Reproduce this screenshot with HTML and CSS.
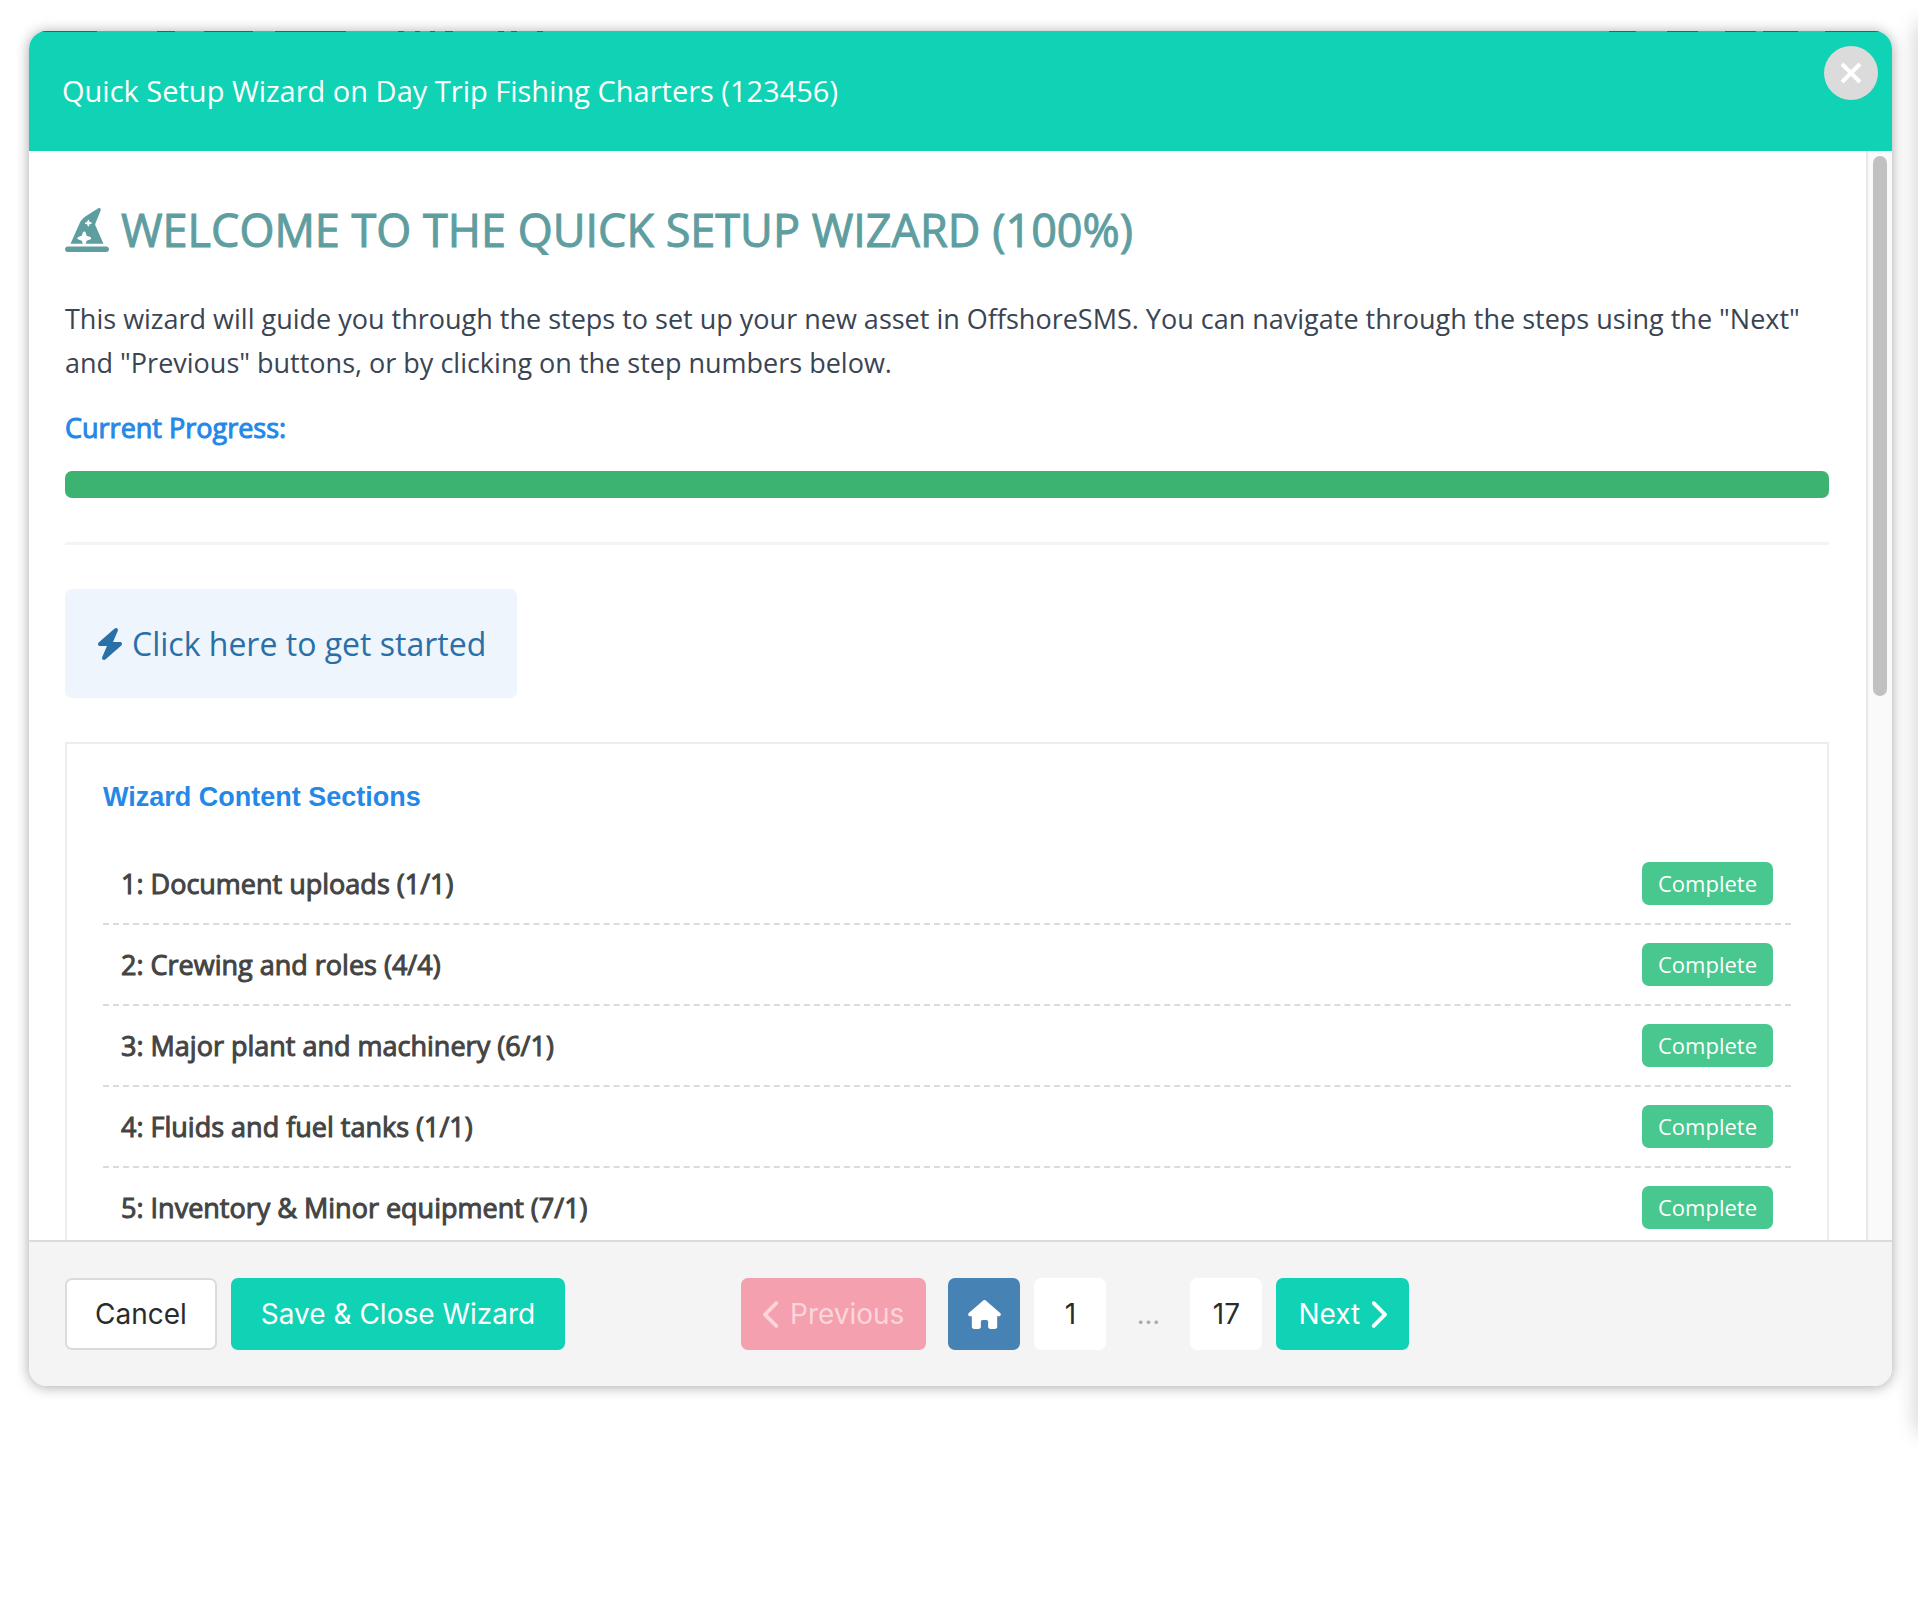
FILE: index.html
```html
<!DOCTYPE html>
<html lang="en">
  <head>
    <meta charset="utf-8">
    <title>Quick Setup Wizard</title>
    <link rel="stylesheet" href="styles.css">
  </head>
  <body>
    <div class="modal" role="dialog" aria-labelledby="modal-title">
      <header class="modal-head">
        <p id="modal-title" class="modal-title">Quick Setup Wizard on Day Trip Fishing Charters (123456)</p>
        <button type="button" class="close" aria-label="Close">
          <svg viewBox="0 0 24 24"><path d="M3 3l18 18M21 3L3 21"/></svg>
        </button>
      </header>

      <div class="modal-body">
        <main class="content">
          <h1>
            <svg class="hat" viewBox="0 0 512 512"><path d="M64 416L168.6 180.7c15.3-34.4 40.3-63.5 72-83.7l146.9-94c3-1.9 6.5-2.9 10-2.9C407.7 0 416 8.3 416 18.6v1.6c0 2.6-.5 5.1-1.4 7.5L354.8 176.9c-1.9 4.7-2.8 9.7-2.8 14.7c0 5.5 1.2 11 3.4 16.1L448 416H240.9l11.8-35.4 40.4-13.5c6.5-2.2 10.9-8.3 10.9-15.2s-4.4-13-10.9-15.2l-40.4-13.5-13.5-40.4C237 276.4 230.9 272 224 272s-13 4.4-15.2 10.9l-13.5 40.4-40.4 13.5C148.4 339 144 345.1 144 352s4.4 13 10.9 15.2l40.4 13.5L207.1 416H64zM279.6 141.5c-1.1-3.3-4.1-5.5-7.6-5.5s-6.5 2.2-7.6 5.5l-6.7 20.2-20.2 6.7c-3.3 1.1-5.5 4.1-5.5 7.6s2.2 6.5 5.5 7.6l20.2 6.7 6.7 20.2c1.1 3.3 4.1 5.5 7.6 5.5s6.5-2.2 7.6-5.5l6.7-20.2 20.2-6.7c3.3-1.1 5.5-4.1 5.5-7.6s-2.2-6.5-5.5-7.6l-20.2-6.7-6.7-20.2zM32 448H480c17.7 0 32 14.3 32 32s-14.3 32-32 32H32c-17.7 0-32-14.3-32-32s14.3-32 32-32z"/></svg>
            WELCOME TO THE QUICK SETUP WIZARD (100%)
          </h1>
          <p class="intro">This wizard will guide you through the steps to set up your new asset in OffshoreSMS. You can navigate through the steps using the "Next" and "Previous" buttons, or by clicking on the step numbers below.</p>
          <label class="progress-label" for="progress">Current Progress:</label>
          <progress id="progress" value="100" max="100"></progress>
          <hr>
          <button type="button" class="start">
            <svg class="bolt" viewBox="0 0 448 512"><path d="M349.4 44.6c5.9-13.7 1.5-29.7-10.6-38.5s-28.6-8-39.9 1.8l-256 224c-10 8.8-13.6 22.9-8.9 35.3S50.7 288 64 288l111.5 0L98.6 467.4c-5.9 13.7-1.5 29.7 10.6 38.5s28.6 8 39.9-1.8l256-224c10-8.8 13.6-22.9 8.9-35.3s-16.6-20.7-30-20.7l-111.5 0L349.4 44.6z"/></svg>
            Click here to get started
          </button>

          <section class="sections">
            <h2>Wizard Content Sections</h2>
            <ul>
              <li><span>1: Document uploads (1/1)</span><span class="tag">Complete</span></li>
              <li><span>2: Crewing and roles (4/4)</span><span class="tag">Complete</span></li>
              <li><span>3: Major plant and machinery (6/1)</span><span class="tag">Complete</span></li>
              <li><span>4: Fluids and fuel tanks (1/1)</span><span class="tag">Complete</span></li>
              <li><span>5: Inventory &amp; Minor equipment (7/1)</span><span class="tag">Complete</span></li>
            </ul>
          </section>
        </main>
        <div class="scrollbar"><div class="thumb"></div></div>
      </div>

      <footer class="modal-foot">
        <div class="actions">
          <button type="button" class="btn cancel">Cancel</button>
          <button type="button" class="btn primary save">Save &amp; Close Wizard</button>
        </div>
        <nav class="pager" aria-label="Wizard steps">
          <button type="button" class="btn previous" disabled>
            <svg class="chevron" viewBox="0 0 320 512"><path d="M9.4 233.4c-12.5 12.5-12.5 32.8 0 45.3l192 192c12.5 12.5 32.8 12.5 45.3 0s12.5-32.8 0-45.3L77.3 256 246.6 86.6c12.5-12.5 12.5-32.8 0-45.3s-32.8-12.5-45.3 0l-192 192z"/></svg>
            Previous
          </button>
          <button type="button" class="btn page home" aria-label="Home">
            <svg class="house" viewBox="0 0 576 512"><path d="M575.8 255.5c0 18-15 32.1-32 32.1h-32l.7 160.2c0 2.7-.2 5.4-.5 8.1V472c0 22.1-17.9 40-40 40H456c-1.1 0-2.2 0-3.3-.1c-1.4 .1-2.8 .1-4.2 .1H416 392c-22.1 0-40-17.9-40-40V448 384c0-17.7-14.3-32-32-32H256c-17.7 0-32 14.3-32 32v64 24c0 22.1-17.9 40-40 40H160 128.1c-1.5 0-3-.1-4.5-.2c-1.2 .1-2.4 .2-3.6 .2H104c-22.1 0-40-17.9-40-40V360c0-.9 0-1.9 .1-2.8V287.6H32c-18 0-32-14-32-32.1c0-9 3-17 10-24L266.4 8c7-7 15-8 22-8s15 2 21 7L564.8 231.5c8 7 12 15 11 24z"/></svg>
          </button>
          <button type="button" class="btn page">1</button>
          <span class="dots">…</span>
          <button type="button" class="btn page">17</button>
          <button type="button" class="btn primary next">
            Next
            <svg class="chevron" viewBox="0 0 320 512"><path d="M310.6 233.4c12.5 12.5 12.5 32.8 0 45.3l-192 192c-12.5 12.5-32.8 12.5-45.3 0s-12.5-32.8 0-45.3L242.7 256 73.4 86.6c-12.5-12.5-12.5-32.8 0-45.3s32.8-12.5 45.3 0l192 192z"/></svg>
          </button>
        </nav>
      </footer>
    </div>
    <div class="side-panel"></div>
  </body>
</html>
```

FILE: styles.css
```css
*{
	box-sizing:border-box;
}
body{
	margin:0;
	position:relative;
	min-height:100vh;
	overflow:hidden;
	background:#fff;
	font-family:"Open Sans", sans-serif;
	font-size:27px;
	color:#3a4453;
}
button{
	font-family:inherit;
	cursor:pointer;
}
svg{
	fill:currentColor;
	flex:none;
}

.modal{
	display:flex;
	flex-direction:column;
	height:calc(100vh - 243px);
	margin:31px 26px 0 29px;
	border-radius:18px;
	overflow:hidden;
	background:#fff;
	box-shadow:0 1px 14px rgba(0,0,0,0.35);
}
/* the dark strips are bits of the page behind, seen along the top edge */
.modal-head{
	display:flex;
	justify-content:space-between;
	align-items:flex-start;
	height:120px;
	flex:none;
	padding:15px 14px 0 33px;
	background:
		linear-gradient(to right, transparent 8px, #1a6f63 8px 68px, transparent 68px 128px, #1a6f63 128px 146px, transparent 146px 175px, #1a6f63 175px 224px, transparent 224px 246px, #1a6f63 246px 317px, transparent 317px 369px, #1a6f63 369px 375px, transparent 375px 386px, #1a6f63 386px 391px, transparent 391px 401px, #1a6f63 401px 406px, transparent 406px 416px, #1a6f63 416px 424px, transparent 424px 469px, #1a6f63 469px 475px, transparent 475px 482px, #1a6f63 482px 488px, transparent 488px 508px, #1a6f63 508px 514px, transparent 514px) top left / 100% 1px no-repeat,
		linear-gradient(to left, transparent 12px, #1a6f63 12px 67px, transparent 67px 94px, #1a6f63 94px 129px, transparent 129px 136px, #1a6f63 136px 167px, transparent 167px 194px, #1a6f63 194px 225px, transparent 225px 256px, #1a6f63 256px 283px, transparent 283px) top left / 100% 1px no-repeat,
		#10d2b4;
}
.modal-title{
	margin:23px 0 0;
	font-size:29px;
	line-height:44px;
	color:#fff;
}
.close{
	display:flex;
	align-items:center;
	justify-content:center;
	width:54px;
	height:54px;
	padding:0;
	border:0;
	border-radius:50%;
	background:#dbdbdb;
	color:#fff;
}
.close svg{
	width:24px;
	height:24px;
	fill:none;
	stroke:currentColor;
	stroke-width:4;
}

.modal-body{
	display:flex;
	flex:1;
	min-height:0;
}
.content{
	flex:1;
	padding:47px 37px 36px 36px;
	overflow:auto;
	scrollbar-width:none;
}
.scrollbar{
	width:26px;
	padding:5px;
	border-left:2px solid #e8e8e8;
	background:#fafafa;
}
.thumb{
	width:14px;
	height:50%;
	border-radius:7px;
	background:#c1c1c1;
}

h1{
	display:flex;
	align-items:center;
	gap:12px;
	margin:0 0 35px;
	font-size:45px;
	line-height:64px;
	font-weight:400;
	color:#5f9ea0;
	-webkit-text-stroke:1px;
}
.hat{
	width:44px;
	height:44px;
}
.intro{
	margin:0 0 21px;
	line-height:44px;
}
.progress-label{
	display:block;
	margin-bottom:21px;
	line-height:44px;
	color:#2488e8;
	-webkit-text-stroke:1px;
}
progress{
	display:block;
	width:100%;
	height:27px;
	border:0;
	border-radius:7px;
	overflow:hidden;
	appearance:none;
	background:#ededed;
}
progress::-webkit-progress-bar{
	background:#ededed;
}
progress::-webkit-progress-value{
	background:#3cb371;
}
hr{
	height:3px;
	margin:44px 0;
	border:0;
	background:#f4f4f4;
}
.start{
	display:flex;
	align-items:center;
	gap:8px;
	height:109px;
	margin-bottom:44px;
	padding:0 31px;
	border:0;
	border-radius:7px;
	background:#eef5fc;
	color:#296fa8;
	font-size:32px;
}
.bolt{
	width:28px;
	height:32px;
}

.sections{
	padding:35px 36px;
	border:2px solid #ededed;
}
h2{
	margin:0 0 29px;
	font-family:"Liberation Sans", Arial, sans-serif;
	font-size:27px;
	line-height:36px;
	font-weight:bold;
	color:#2488e8;
}
ul{
	margin:0;
	padding:0;
	list-style:none;
}
li{
	display:flex;
	justify-content:space-between;
	align-items:center;
	padding:18px;
	border-bottom:2px dashed #dbdbdb;
	color:#444;
	-webkit-text-stroke:1px;
}
li span{
	line-height:43px;
}
.tag{
	padding:0 16px;
	border-radius:7px;
	background:#48c78e;
	color:#fff;
	font-size:22px;
	-webkit-text-stroke:0;
}

.modal-foot{
	display:grid;
	grid-template-columns:3fr 5fr;
	gap:7px;
	flex:none;
	padding:36px;
	border-top:2px solid #dbdbdb;
	background:#f4f4f4;
}
.actions,
.pager{
	display:flex;
	align-items:center;
	gap:14px;
}
.btn{
	display:flex;
	align-items:center;
	justify-content:center;
	gap:8px;
	height:72px;
	padding:0 22px;
	border:0;
	border-radius:7px;
	background:#fff;
	color:#2b2b2b;
	font-family:Inter, sans-serif;
	font-size:28px;
	white-space:nowrap;
}
.cancel{
	padding:0 28px;
	border:2px solid #dbdbdb;
}
.save{
	padding:0 30px;
}
.primary{
	background:#10d2b4;
	color:#fff;
}
.previous{
	margin-right:8px;
	background:#f5a0af;
	color:#fbd5dc;
}
.page{
	width:72px;
	padding:0;
}
.home{
	background:#4682b4;
	color:#fff;
}
.house{
	width:33px;
	height:29px;
}
.chevron{
	width:19px;
	height:31px;
}
.dots{
	width:56px;
	text-align:center;
	color:#aaa;
	font-family:Inter, sans-serif;
}

/* sits just past the right edge, only its shadow is on screen */
.side-panel{
	position:absolute;
	top:24px;
	right:-20px;
	width:20px;
	height:1408px;
	box-shadow:0 0 22px rgba(0,0,0,0.22);
}
```
